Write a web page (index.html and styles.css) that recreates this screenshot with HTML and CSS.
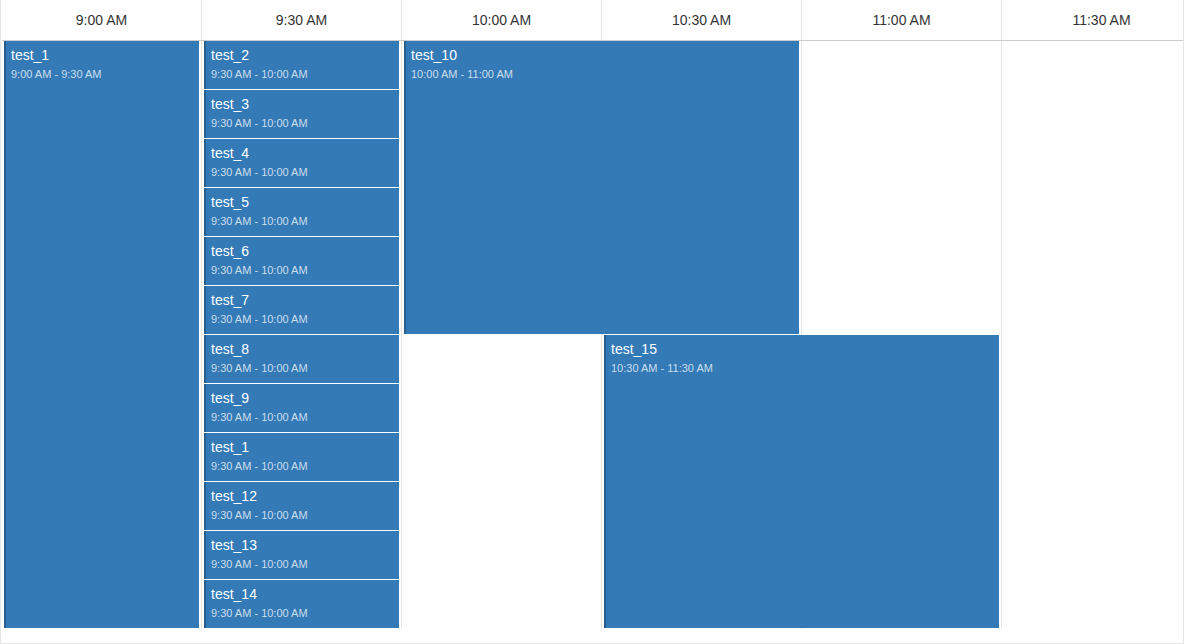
FILE: index.html
```html
<!DOCTYPE html>
<html lang="en">
  <head>
    <meta charset="UTF-8" />
    <title>Scheduler</title>
    <link rel="stylesheet" href="styles.css">
  </head>
  <body>
    <div class="scheduler">
      <div class="timeHeader">
        <div class="timeCell">9:00 AM</div>
        <div class="timeCell">9:30 AM</div>
        <div class="timeCell">10:00 AM</div>
        <div class="timeCell">10:30 AM</div>
        <div class="timeCell">11:00 AM</div>
        <div class="timeCell">11:30 AM</div>
      </div>
      <div class="timeBody">
        <!-- column lines -->
        <div class="slotColumn" style="grid-column: 1"></div>
        <div class="slotColumn" style="grid-column: 2"></div>
        <div class="slotColumn" style="grid-column: 3"></div>
        <div class="slotColumn" style="grid-column: 4"></div>
        <div class="slotColumn" style="grid-column: 5"></div>
        <div class="slotColumn" style="grid-column: 6"></div>

        <!-- events -->
        <div class="event" style="grid-column: 1; grid-row: 1 / 13">
          <div class="eventTitle">test_1</div>
          <div class="eventTime">9:00 AM - 9:30 AM</div>
        </div>
        <div class="event" style="grid-column: 2; grid-row: 1">
          <div class="eventTitle">test_2</div>
          <div class="eventTime">9:30 AM - 10:00 AM</div>
        </div>
        <div class="event" style="grid-column: 2; grid-row: 2">
          <div class="eventTitle">test_3</div>
          <div class="eventTime">9:30 AM - 10:00 AM</div>
        </div>
        <div class="event" style="grid-column: 2; grid-row: 3">
          <div class="eventTitle">test_4</div>
          <div class="eventTime">9:30 AM - 10:00 AM</div>
        </div>
        <div class="event" style="grid-column: 2; grid-row: 4">
          <div class="eventTitle">test_5</div>
          <div class="eventTime">9:30 AM - 10:00 AM</div>
        </div>
        <div class="event" style="grid-column: 2; grid-row: 5">
          <div class="eventTitle">test_6</div>
          <div class="eventTime">9:30 AM - 10:00 AM</div>
        </div>
        <div class="event" style="grid-column: 2; grid-row: 6">
          <div class="eventTitle">test_7</div>
          <div class="eventTime">9:30 AM - 10:00 AM</div>
        </div>
        <div class="event" style="grid-column: 2; grid-row: 7">
          <div class="eventTitle">test_8</div>
          <div class="eventTime">9:30 AM - 10:00 AM</div>
        </div>
        <div class="event" style="grid-column: 2; grid-row: 8">
          <div class="eventTitle">test_9</div>
          <div class="eventTime">9:30 AM - 10:00 AM</div>
        </div>
        <div class="event" style="grid-column: 2; grid-row: 9">
          <div class="eventTitle">test_1</div>
          <div class="eventTime">9:30 AM - 10:00 AM</div>
        </div>
        <div class="event" style="grid-column: 2; grid-row: 10">
          <div class="eventTitle">test_12</div>
          <div class="eventTime">9:30 AM - 10:00 AM</div>
        </div>
        <div class="event" style="grid-column: 2; grid-row: 11">
          <div class="eventTitle">test_13</div>
          <div class="eventTime">9:30 AM - 10:00 AM</div>
        </div>
        <div class="event" style="grid-column: 2; grid-row: 12">
          <div class="eventTitle">test_14</div>
          <div class="eventTime">9:30 AM - 10:00 AM</div>
        </div>
        <div class="event" style="grid-column: 3 / 5; grid-row: 1 / 7">
          <div class="eventTitle">test_10</div>
          <div class="eventTime">10:00 AM - 11:00 AM</div>
        </div>
        <div class="event" style="grid-column: 4 / 6; grid-row: 7 / 13">
          <div class="eventTitle">test_15</div>
          <div class="eventTime">10:30 AM - 11:30 AM</div>
        </div>
      </div>
    </div>
  </body>
</html>
```

FILE: styles.css
```css
body {
  margin: 0;
  font-family: "Liberation Sans", Arial, sans-serif;
  color: #333;
}

.scheduler {
  box-sizing: border-box;
  width: 1184px;
  height: 644px;
  padding-left: 1px;
  border: 1px solid #e5e5e5;
  border-top: none;
  overflow: hidden;
}

.timeHeader {
  display: flex;
  width: 1200px;
  height: 40px;
  border-bottom: 1px solid #ccc;
}

.timeCell {
  flex: 0 0 200px;
  box-sizing: border-box;
  border-right: 1px solid #e5e5e5;
  line-height: 40px;
  font-size: 14px;
  text-align: center;
}

.timeBody {
  display: grid;
  grid-template-columns: repeat(6, 200px);
  grid-template-rows: repeat(12, 49px);
}

.slotColumn {
  grid-row: 1 / -1;
  border-right: 1px solid #e5e5e5;
}

.event {
  margin: 0 3px 1px 2px;
  padding: 6px 5px 0 5px;
  background-color: #337ab7;
  border-left: 2px solid #285e8e;
  color: #fff;
  overflow: hidden;
}

.eventTitle {
  font-size: 14px;
  line-height: 17px;
}

.eventTime {
  margin-top: 4px;
  font-size: 11px;
  line-height: 13px;
  color: rgba(255, 255, 255, 0.75);
}
```
